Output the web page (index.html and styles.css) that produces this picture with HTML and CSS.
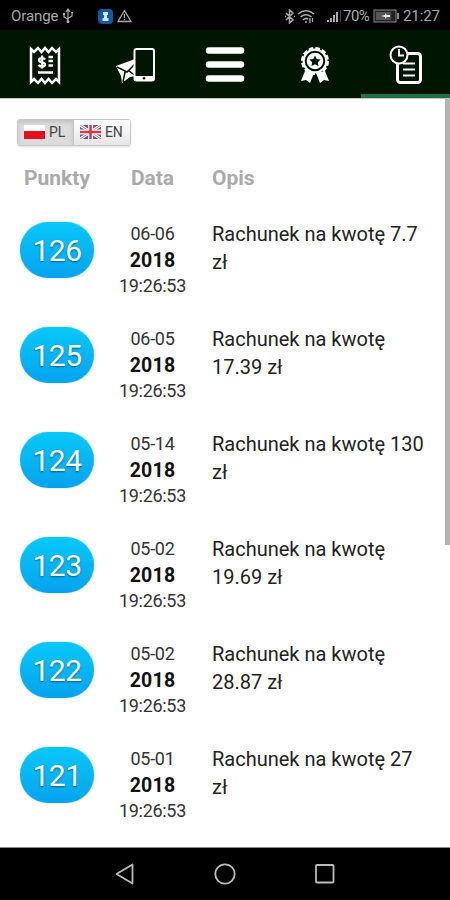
FILE: index.html
```html
<!DOCTYPE html>
<html lang="pl">
<head>
<meta charset="utf-8">
<title>Historia punktów</title>
<link rel="stylesheet" href="styles.css">
</head>
<body>
<div class="phone">
  <header class="status">
    <span class="carrier">Orange</span>
    <svg class="usb" width="12" height="16" viewBox="0 0 12 16" fill="none" stroke="#aaa" stroke-width="1.2"><path d="M6 13V2M4 4l2-3 2 3M2 6v3l4 2.5M10 5v3L6 10.500"/><circle cx="6" cy="13.500" r="1" fill="#aaa"/><circle cx="2" cy="6" r=".7"/><path d="M9 4.500h2"/></svg>
    <svg class="info" width="15" height="15" viewBox="0 0 15 15"><rect width="15" height="15" rx="4" fill="#1557a0"/><path d="M5 3h5v3H9v3h1.500v3h-6V9H6V6H5z" fill="#d5e2ef"/></svg>
    <svg class="warn" width="15" height="14" viewBox="0 0 15 14" fill="none" stroke="#aaa" stroke-width="1.300"><path d="M7.500 1.500L14 12.500H1z"/><path d="M7.500 5v4M7.500 10v1.300"/></svg>
    <span class="spring"></span>
    <svg class="bt" width="12" height="15" viewBox="0 0 12 15" fill="none" stroke="#aaa" stroke-width="1.500"><path d="M2 4l7 7-3.500 3V1L9 4l-7 7M1 7.500h1M10 7.500h1"/></svg>
    <svg class="wifi" width="18" height="15" viewBox="0 0 18 15" fill="none" stroke="#aaa" stroke-width="1.600"><path d="M1 5Q9-1.500 17 5M3.500 8Q9 3.500 14.500 8M6 11Q9 8.500 11 10"/><path d="M8 13h2M13 9v5M15.500 9v4" stroke-width="1.300"/></svg>
    <svg class="signal" width="16" height="14" viewBox="0 0 16 14" fill="#aaa"><path d="M1 11h2v2H1zM4 9h2v4H4zM7 6h2v7H7zM10 3h2v10h-2z"/><path d="M14 1h1v12h-1z" fill="#444"/></svg>
    <span class="percent">70%</span>
    <svg class="battery" width="27" height="14" viewBox="0 0 27 14"><rect x="1" y="1" width="22" height="12" fill="#222" stroke="#888"/><path d="M3 3h15v8H3z" fill="#555"/><path d="M8 7l4-1V4l2 2h3v2h-3l-2 2V8z" fill="#eee"/><path d="M25 4v6" stroke="#888" stroke-width="2"/></svg>
    <span class="clock">21:27</span>
  </header>

  <nav class="tabs">
    <a class="tab"><svg width="34" height="40" viewBox="0 0 34 40" fill="none" stroke="#fff" stroke-width="2.500"><path d="M3 4l3 3 4-4 3.500 4L17 3l3.500 4L24 3l4 4 3-3v33l-3-3-4 4-3.500-4-3.500 4-3.500-4-3.500 4-4-4-3 3z"/><path d="M17 14.500c-1-2-6-2-6 .8 0 2.700 6 1.500 6 4.200 0 2.600-5 2.700-6.500.3M14 10.500v13" stroke-width="2.300"/><path d="M20.500 12H25M20.500 16H25M20.500 20.500H25M10 27.500h15" stroke-width="2.300"/></svg></a>
    <a class="tab"><svg width="40" height="40" viewBox="0 0 40 40"><path d="M1 21l19-7v17l-5 1-8 6-1-7z" fill="#fff"/><path d="M2 22l10 5 9-9M8 37l2-10M14 26l7 5" fill="none" stroke="#001502" stroke-width="1.500"/><rect x="19.500" y="4" width="19.500" height="31.500" rx="2" fill="#001502" stroke="#fff" stroke-width="2"/><path d="M19 31h20v5H19z" fill="#fff"/><circle cx="29" cy="33.300" r="1.300" fill="#001502"/></svg></a>
    <a class="tab"><svg width="40" height="40" viewBox="0 0 40 40"><path d="M4 5.500h32M4 19.500h32M4 33.500h32" stroke="#fff" stroke-width="6.500" stroke-linecap="round"/></svg></a>
    <a class="tab"><svg width="34" height="40" viewBox="0 0 34 40"><path d="M7 26L3 36l5-1 4 3 4-10zM27 26l4 10-5-1-4 3-4-10z" fill="#fff"/><circle cx="17" cy="16" r="12.500" fill="#fff" stroke="#fff" stroke-width="3" stroke-dasharray="4.500 2.045"/><circle cx="17" cy="16" r="9.300" fill="none" stroke="#001502" stroke-width="2"/><path d="M17 10.500l1.700 3.500 3.900.5-2.800 2.700.7 3.900-3.500-1.900-3.500 1.900.7-3.900-2.800-2.700 3.900-.5z" fill="#001502"/></svg></a>
    <a class="tab tab-active"><svg width="36" height="42" viewBox="0 0 36 42" fill="none" stroke="#fff"><rect x="9.500" y="9.500" width="23" height="29" rx="3" stroke-width="3"/><path d="M15 19.500h12M15 25.500h12M15 31.500h12" stroke-width="2.200"/><circle cx="11" cy="11" r="8.500" fill="#001502" stroke-width="2"/><path d="M11 5v6.500h5" stroke-width="2"/></svg></a>
  </nav>

  <main class="content">
    <div class="langs">
      <button class="lang lang-on"><svg width="21" height="14" viewBox="0 0 21 14"><path d="M0 0h21v7H0z" fill="#fff"/><path d="M0 6h21v8H0z" fill="#e0101c"/></svg>PL</button><button class="lang"><svg width="21" height="14" viewBox="0 0 21 14"><path d="M0 0h21v14H0z" fill="#5a5ba5"/><path d="M0 0l21 14M21 0L0 14" stroke="#fff" stroke-width="3"/><path d="M0 0l21 14M21 0L0 14" stroke="#e0717c" stroke-width="1"/><path d="M10.500 0v14M0 7h21" stroke="#fff" stroke-width="5"/><path d="M10.500 0v14M0 7h21" stroke="#e2303c" stroke-width="2.500"/></svg>EN</button>
    </div>
    <div class="row head"><span>Punkty</span><span>Data</span><span class="opis">Opis</span></div>
    <div class="row"><b class="badge">126</b><div class="date">06-06<strong>2018</strong><time>19:26:53</time></div><p class="desc">Rachunek na kwotę 7.7 zł</p></div>
    <div class="row"><b class="badge">125</b><div class="date">06-05<strong>2018</strong><time>19:26:53</time></div><p class="desc">Rachunek na kwotę 17.39 zł</p></div>
    <div class="row"><b class="badge">124</b><div class="date">05-14<strong>2018</strong><time>19:26:53</time></div><p class="desc">Rachunek na kwotę 130 zł</p></div>
    <div class="row"><b class="badge">123</b><div class="date">05-02<strong>2018</strong><time>19:26:53</time></div><p class="desc">Rachunek na kwotę 19.69 zł</p></div>
    <div class="row"><b class="badge">122</b><div class="date">05-02<strong>2018</strong><time>19:26:53</time></div><p class="desc">Rachunek na kwotę 28.87 zł</p></div>
    <div class="row"><b class="badge">121</b><div class="date">05-01<strong>2018</strong><time>19:26:53</time></div><p class="desc">Rachunek na kwotę 27 zł</p></div>
    <i class="scrollbar"></i>
  </main>

  <footer class="keys">
    <svg width="22" height="24" viewBox="0 0 22 24"><path d="M18.500 2.500v19L2.500 12z"/></svg>
    <svg width="22" height="24" viewBox="0 0 22 24"><circle cx="11" cy="12" r="9.700"/></svg>
    <svg width="22" height="24" viewBox="0 0 22 24"><rect x="2" y="3" width="17.500" height="17.500" rx="1"/></svg>
  </footer>
</div>
</body>
</html>
```
FILE: styles.css
```css
* { box-sizing: border-box; }
body { margin: 0; font-family: Roboto, "Liberation Sans", sans-serif; background: #fff; }
svg { display: block; flex: none; }
.phone { width: 450px; height: 900px; display: flex; flex-direction: column; overflow: hidden; }

.status { height: 30px; flex: none; display: flex; align-items: center; background: #000; color: #aaa; font-size: 15px; line-height: 30px; padding: 2px 10px 0 11px; }
.usb { margin-left: 3px; }
.carrier { width: 48px; letter-spacing: -.1px; }
.info { margin-left: 24px; }
.warn { margin-left: 4px; }
.spring { flex: 1; }
.bt { margin-right: 1px; }
.wifi { margin-right: 2px; }
.signal { margin-left: 9px; }
.percent { width: 29px; margin-left: 1px; letter-spacing: -.5px; }
.battery { margin-left: 1px; }
.clock { width: 37px; margin-left: 3px; letter-spacing: -.1px; }

.tabs { height: 68px; flex: none; display: grid; grid-template-columns: repeat(5, 1fr); background: #001502; }
.tab { display: flex; align-items: center; justify-content: center; padding-top: 6px; border-bottom: 4px solid transparent; }
.tab-active { border-bottom-color: #1f7048; margin-left: 1px; }

.content { position: relative; height: 750px; flex: none; overflow: hidden; padding: 20px 17px 0; border-top: 1px solid #c4c4c4; border-bottom: 1px solid #888; }
.scrollbar { position: absolute; right: 0; top: 0; width: 5px; height: 446px; background: #b4b4b4; }

.langs { display: inline-flex; height: 27px; border: 1px solid #c9c9c9; border-radius: 3px; overflow: hidden; box-shadow: 0 1px 2px #0002; vertical-align: top; }
.lang { display: flex; align-items: center; gap: 4px; width: 56px; border: 0; padding: 0 0 2px 6px; font: 14px Roboto, sans-serif; letter-spacing: -.2px; color: #444; background: linear-gradient(#fff, #e6e6e6); }
.lang-on { background: #dcdcdc; border-right: 1px solid #c5c5c5; box-shadow: inset 0 2px 4px #0002; }

.row { display: grid; grid-template-columns: 80px 111px 1fr; height: 105px; align-items: start; }
.head { height: 76px; padding-top: 17px; font-size: 21px; line-height: 30px; font-weight: 700; color: #aaa; text-align: center; letter-spacing: 0; }
.head .opis { padding-left: 4px; text-align: left; }
.badge { width: 74px; height: 56px; margin-left: 3px; border-radius: 28px; background: linear-gradient(#08c8f8, #05a3ee); color: #fff; font-size: 30px; line-height: 57px; font-weight: 400; text-align: center; letter-spacing: -.6px; text-shadow: 0 1px 2px #0007; box-shadow: 0 0 1px #08a8e8; }
.date { margin-top: -1px; text-align: center; font-size: 18px; line-height: 26px; color: #333; letter-spacing: -.3px; }
.date strong, .date time { display: block; }
.date strong { font-size: 19.5px; line-height: 27px; margin-bottom: -1px; color: #111; letter-spacing: .2px; }
.desc { margin: -1px 0 0; padding-left: 4px; width: 224px; font-size: 20px; line-height: 27.5px; color: #222; letter-spacing: 0; }

.keys { height: 52px; flex: none; display: flex; justify-content: center; gap: 78px; align-items: center; background: #000; }
.keys svg { fill: none; stroke: #bbb; stroke-width: 1.8; stroke-linejoin: round; }
```
